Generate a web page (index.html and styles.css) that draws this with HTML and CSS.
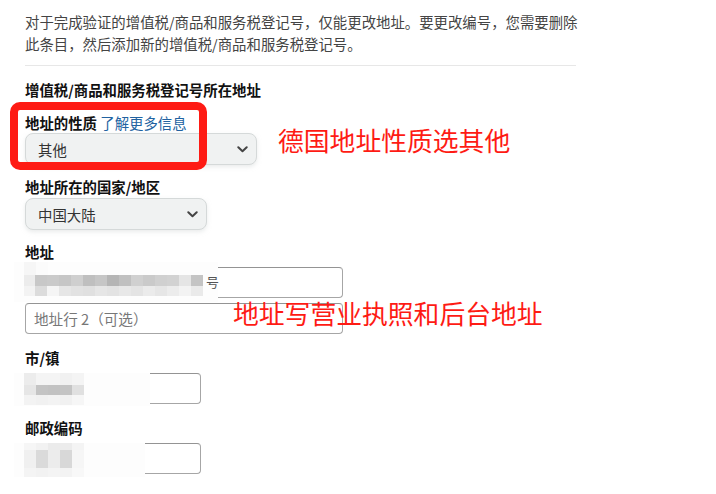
FILE: index.html
```html
<!DOCTYPE html>
<html lang="zh">
<head>
<meta charset="utf-8">
<link rel="stylesheet" href="styles.css">
</head>
<body>
<div class="page">
  <p class="intro">对于完成验证的增值税/商品和服务税登记号，仅能更改地址。要更改编号，您需要删除此条目，然后添加新的增值税/商品和服务税登记号。</p>
  <div class="rule"></div>
  <h3 class="section">增值税/商品和服务税登记号所在地址</h3>

  <div class="field first">
    <div class="label">地址的性质 <a class="link">了解更多信息</a></div>
    <div class="select wide"><span>其他</span><svg class="chev" width="11" height="7" viewBox="0 0 11 7"><path d="M1.3 1.3 L5.5 5.3 L9.7 1.3" fill="none" stroke="#444" stroke-width="2" stroke-linecap="round" stroke-linejoin="round"/></svg></div>
  </div>

  <div class="field">
    <div class="label">地址所在的国家/地区</div>
    <div class="select narrow"><span>中国大陆</span><svg class="chev" width="11" height="7" viewBox="0 0 11 7"><path d="M1.3 1.3 L5.5 5.3 L9.7 1.3" fill="none" stroke="#444" stroke-width="2" stroke-linecap="round" stroke-linejoin="round"/></svg></div>
  </div>

  <div class="field inputs">
    <div class="label">地址</div>
    <div class="input long redact-wrap">
      <div class="mosaic m-addr">
        <div class="mrow r0"><i style="background:#f6f6f6"></i><i style="background:#fbfbfb"></i></div>
        <div class="mrow r1"><i style="background:#ececec"></i><i style="background:#c8c8c8"></i><i style="background:#cacaca"></i><i style="background:#c6c6c6"></i><i style="background:#cfcfcf"></i><i style="background:#bfbfbf"></i><i style="background:#c6c6c6"></i><i style="background:#b5b5b5"></i><i style="background:#c0c0c0"></i><i style="background:#d0d0d0"></i><i style="background:#cacaca"></i><i style="background:#d0d0d0"></i><i style="background:#d2d2d2"></i><i style="background:#e5e5e5"></i><i style="background:#c4c4c4"></i></div>
        <div class="mrow r2"><i style="background:#f3f3f3"></i><i style="background:#dcdcdc"></i><i style="background:#f5f5f5"></i><i style="background:#e6e6e6"></i><i style="background:#e2e2e2"></i><i style="background:#e0e0e0"></i><i style="background:#e6e6e6"></i><i style="background:#e3e3e3"></i><i style="background:#e8e8e8"></i><i style="background:#e4e4e4"></i><i style="background:#ebebeb"></i><i style="background:#e6e6e6"></i><i style="background:#ececec"></i><i style="background:#f3f3f3"></i><i style="background:#eaeaea"></i></div>
      </div>
      <span class="tail">号</span>
    </div>
    <div class="input long"><span class="ph">地址行 2（可选）</span></div>
  </div>

  <div class="field inputs">
    <div class="label">市/镇</div>
    <div class="input short redact-wrap">
      <div class="mosaic m-city">
        <div class="mrow c1"><i style="background:#ececec"></i><i style="background:#f4f4f4"></i><i style="background:#f4f4f4"></i><i style="background:#f1f1f1"></i><i style="background:#f4f4f4"></i></div>
        <div class="mrow c2"><i style="background:#e6e6e6"></i><i style="background:#c4c4c4"></i><i style="background:#c2c2c2"></i><i style="background:#c4c4c4"></i><i style="background:#e0e0e0"></i></div>
        <div class="mrow c3"><i style="background:#f3f3f3"></i><i style="background:#f1f1f1"></i><i style="background:#f3f3f3"></i><i style="background:#f1f1f1"></i><i style="background:#f6f6f6"></i></div>
      </div>
    </div>
  </div>

  <div class="field inputs">
    <div class="label">邮政编码</div>
    <div class="input short redact-wrap">
      <div class="mosaic m-zip">
        <div class="mrow z1"><i style="background:#f6f6f6"></i><i style="background:#f2f2f2"></i><i style="background:#ebebeb"></i><i style="background:#ececec"></i><i style="background:#f4f4f4"></i></div>
        <div class="mrow z2"><i style="background:#f0f0f0"></i><i style="background:#dadada"></i><i style="background:#ececec"></i><i style="background:#d8d8d8"></i><i style="background:#f6f6f6"></i></div>
        <div class="mrow z3"><i style="background:#f4f4f4"></i><i style="background:#f2f2f2"></i><i style="background:#f4f4f4"></i><i style="background:#f3f3f3"></i><i style="background:#f8f8f8"></i></div>
      </div>
    </div>
  </div>
</div>

<div class="mark-box"></div>
<div class="note note-1">德国地址性质选其他</div>
<div class="note note-2">地址写营业执照和后台地址</div>
</body>
</html>
```

FILE: styles.css
```css
html, body {
  margin: 0;
  padding: 0;
  background: #ffffff;
}
body {
  font-family: "Noto Sans CJK SC", "Noto Sans", sans-serif;
  color: #0f1111;
  font-size: 14.4px;
  position: relative;
  width: 716px;
  height: 494px;
  overflow: hidden;
}
.page {
  padding-left: 25px;
  width: 551px;
}
.intro {
  margin: 11px -12px 0 0;
  line-height: 22px;
  color: #444;
  font-size: 14.4px;
}
.rule {
  margin-top: 10px;
  height: 1px;
  background: #e7e7e7;
}
.section {
  margin: 14px 0 0 0;
  font-size: 14.4px;
  line-height: 20px;
  font-weight: 700;
  color: #111;
}
.field {
  margin-top: 12px;
  display: flex;
  flex-direction: column;
  align-items: flex-start;
}
.field.first {
  margin-top: 13px;
}
.label {
  font-weight: 700;
  line-height: 20px;
  color: #111;
}
.link {
  font-weight: 400;
  color: #2162a1;
}
.select {
  box-sizing: border-box;
  height: 32px;
  margin-top: 0;
  background: #f0f2f2;
  border: 1px solid #d5d9d9;
  border-radius: 8px;
  box-shadow: 0 2px 4px rgba(213, 217, 217, 0.5);
  display: flex;
  align-items: center;
  justify-content: space-between;
  padding: 0 8px 0 12px;
  font-size: 14.4px;
  color: #333;
}
.field + .field .select { margin-top: 1px; }
.select.wide { width: 232px; }
.select.narrow { width: 182px; }
.chev { display: block; margin-top: 1px; }

.inputs .label { margin-bottom: 5px; }
.inputs { margin-top: 12px; }
.inputs + .inputs { margin-top: 14px; }
.input {
  box-sizing: border-box;
  height: 31px;
  border: 1px solid #a6a6a6;
  border-top-color: #949494;
  border-radius: 4px;
  display: flex;
  align-items: center;
  padding: 0 8px;
  position: relative;
  background: #fff;
}
.input + .input { margin-top: 5px; }
.input.long { width: 318px; }
.input.short { width: 176px; }
.ph {
  color: #777;
  font-size: 14.6px;
}
.tail {
  position: absolute;
  left: 180px;
  top: 4px;
  font-size: 13px;
  color: #555;
  z-index: 3;
}

/* redaction mosaics lie over the inputs */
.mosaic {
  position: absolute;
  background: #fdfdfd;
  display: flex;
  flex-direction: column;
  z-index: 2;
}
.mrow { display: flex; }
.mrow i { display: block; width: 12px; }
.m-addr { left: -12px; top: -6px; width: 194px; height: 40px; padding-left: 10px; }
.m-addr .r0 { height: 13px; }
.m-addr .r1 { height: 11px; }
.m-addr .r2 { height: 10px; }
.m-addr .r1 i:first-child, .m-addr .r2 i:first-child { width: 11px; }

.m-city { left: -12px; top: -1px; width: 126px; height: 33px; padding-left: 10px; }
.m-city .c1 { height: 12px; }
.m-city .c2 { height: 10px; }
.m-city .c3 { height: 10px; }

.m-zip { left: -12px; top: -1px; width: 121px; height: 34px; padding-left: 10px; }
.m-zip .z1 { height: 7px; }
.m-zip .z2 { height: 18px; }
.m-zip .z3 { height: 9px; }

/* annotation overlays */
.mark-box {
  position: absolute;
  left: 10px;
  top: 102px;
  width: 181px;
  height: 52px;
  border: 8px solid #fe1b14;
  border-radius: 10px;
  z-index: 3;
}
.note {
  position: absolute;
  color: #fe1b14;
  font-size: 25.8px;
  line-height: 32px;
  white-space: nowrap;
  z-index: 3;
}
.note-1 { left: 278px; top: 124px; }
.note-2 { left: 233px; top: 297px; }
```
